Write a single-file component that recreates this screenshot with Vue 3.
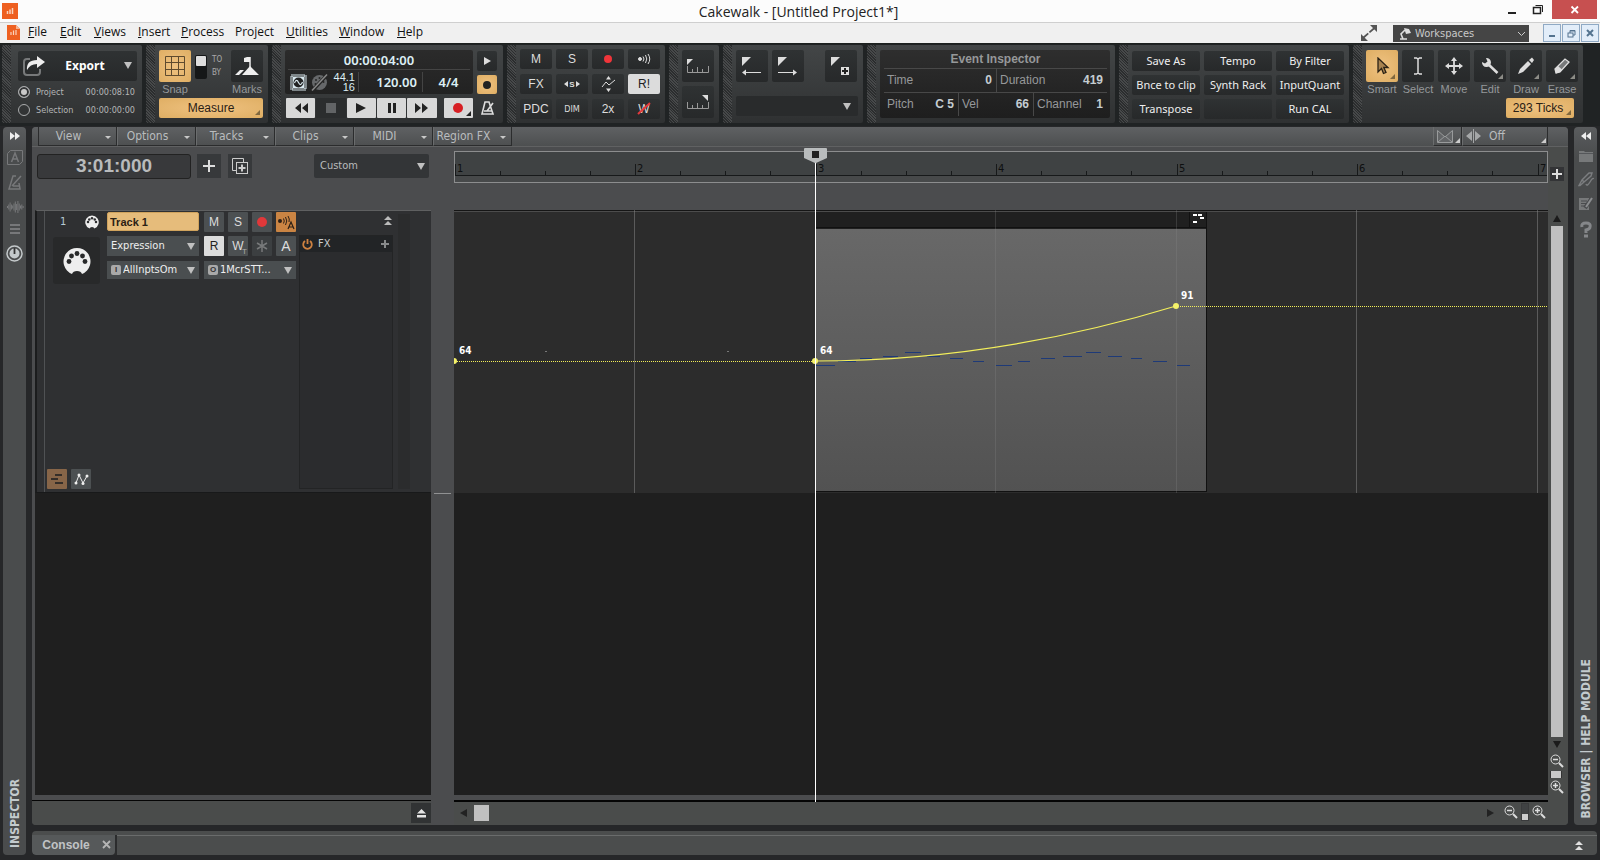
<script setup>
const menus = [
  { key: 'F', rest: 'ile', w: 32 },
  { key: 'E', rest: 'dit', w: 34 },
  { key: 'V', rest: 'iews', w: 44 },
  { key: 'I', rest: 'nsert', w: 43 },
  { key: 'P', rest: 'rocess', w: 54 },
  { key: '', rest: 'Project', w: 51 },
  { key: 'U', rest: 'tilities', w: 53 },
  { key: 'W', rest: 'indow', w: 58 },
  { key: 'H', rest: 'elp', w: 32 }
]
const menuColumns = menus.map(m => m.w + 'px').join(' ')
const tabs = ['View', 'Options', 'Tracks', 'Clips', 'MIDI', 'Region FX']
const custom = ['Save As', 'Tempo', 'By Filter', 'Bnce to clip', 'Synth Rack', 'InputQuant', 'Transpose', '', 'Run CAL']
const tools = ['Smart', 'Select', 'Move', 'Edit', 'Draw', 'Erase']

const barWidth = 180.5
const bars = [0, 1, 2, 3, 4, 5, 6].map(i => Math.floor(i * barWidth))
const ticks = Array.from({ length: 25 }, (_, i) => Math.floor(i * barWidth / 4)).filter((_, i) => i % 4)
const notes = [
  [362, 155, 19], [384, 151, 18], [406, 148, 12], [429, 146, 15], [451, 142, 16], [473, 146, 13],
  [496, 148, 13], [519, 151, 11], [542, 155, 16], [564, 151, 12], [587, 148, 14], [609, 146, 19],
  [632, 142, 15], [654, 146, 14], [677, 148, 11], [699, 151, 14], [723, 155, 13]
]
const wave = [2, 5, 9, 5, 3, 7, 11, 6, 12, 7, 3, 5, 2]
</script>

<template>
  <div class="app">
    <header class="titlebar">
      <svg class="logo" width="16" height="16" viewBox="0 0 16 16"><rect width="16" height="16" fill="#ee6021" /><path d="M5.500 11V8M8 11V6.500M10.500 11V5" stroke="#fbd3bd" stroke-width="1.500" /></svg>
      <h1>Cakewalk - [Untitled Project1*]</h1>
      <div class="winbtns">
        <button aria-label="Minimize"><svg width="10" height="12"><rect x="1" y="8" width="8" height="2" fill="#222" /></svg></button>
        <button aria-label="Restore"><svg width="12" height="12" fill="none" stroke="#222"><rect x="1.500" y="3.500" width="7" height="6" stroke-width="1.500" /><path d="M3.500 1.500H10.500V8" /></svg></button>
        <button class="close" aria-label="Close"><svg width="10" height="10" stroke="#fff" stroke-width="1.800"><path d="M1.500 1.500 8 8M8 1.500 1.500 8" /></svg></button>
      </div>
    </header>

    <nav class="menubar">
      <svg class="doc" width="14" height="17" viewBox="0 0 14 17"><path d="M0 1H9L13 5V16H0Z" fill="#ee6021" /><path d="M9 1 13 5H9Z" fill="#f8b28e" /><path d="M4 11V8M6.500 11V6.500M9 11V6" stroke="#fbd3bd" stroke-width="1.200" /></svg>
      <div class="menus" :style="{ gridTemplateColumns: menuColumns }">
        <button v-for="m in menus" :key="m.rest"><u>{{ m.key }}</u>{{ m.rest }}</button>
      </div>
      <svg class="expand" width="18" height="16" viewBox="0 0 18 16"><path d="M3 13 14.500 3" stroke="#555" stroke-width="1.800" stroke-dasharray="7 1.500" /><path d="M10 0H17V7ZM1 9V16H8Z" fill="#555" /></svg>
      <label class="workspaces">
        <svg width="12" height="13" viewBox="0 0 12 13"><path d="M1 12H8M4 12 2 7 6 3" fill="none" stroke="#ddd" stroke-width="1.600" /><path d="M5 1 10 2 12 6 7 7Z" fill="#ddd" /></svg>
        <select aria-label="Workspaces"><option>Workspaces</option></select>
        <svg width="9" height="6" fill="none" stroke="#ccc"><path d="M1 1 4.500 4.500 8 1" /></svg>
      </label>
      <div class="mdi">
        <button aria-label="Minimize view"><svg width="8" height="10"><rect x="1" y="7" width="6" height="2" fill="#54738f" /></svg></button>
        <button aria-label="Restore view"><svg width="9" height="9" fill="none" stroke="#54738f"><rect x="1" y="4" width="5" height="4" /><path d="M3 4V1.500H8V6H6M3 2H8" /></svg></button>
        <button aria-label="Close view"><svg width="8" height="8" stroke="#54738f" stroke-width="2"><path d="M1 1 7 7M7 1 1 7" /></svg></button>
      </div>
    </nav>

    <section class="toolbar">
      <div class="module m-export">
        <button class="export">
          <svg width="24" height="22" viewBox="0 0 24 22"><path d="M8 4H5Q2 4 2 7V17Q2 20 5 20H15Q18 20 18 17V14" fill="none" stroke="#77797a" stroke-width="2" /><path d="M5 15Q4 5 15 5V1L23 7 15 13V9Q8 9 5 15Z" fill="#eee" /></svg>
          <span>Export</span><i class="tri"></i>
        </button>
        <label class="range"><input type="radio" name="range" checked /><span>Project</span><span>00:00:08:10</span></label>
        <label class="range"><input type="radio" name="range" /><span>Selection</span><span>00:00:00:00</span></label>
      </div>

      <div class="module m-snap">
        <div class="snap-row">
          <div class="tool"><button class="sq gold" aria-label="Snap"><svg width="20" height="20" fill="none" stroke="#5f4b2e"><path d="M.5.500H19.500V19.500H.5ZM.5 6.500H19.500M.5 13.500H19.500M6.500.500V19.500M13.500.500V19.500" /></svg></button><span>Snap</span></div>
          <button class="toggle" aria-label="Snap to or by"><i></i></button>
          <div class="toby"><span>TO</span><span>BY</span></div>
          <div class="tool"><button class="sq" aria-label="Marks"><svg width="26" height="22" viewBox="0 0 26 22"><path d="M1 20 6 15H10L5 20ZM8 20 16 11 25 20Z" fill="#eee" /><path d="M16 13V2" stroke="#eee" stroke-width="1.500" /><path d="M16 2H13L10 3V7H16Z" fill="#eee" /></svg></button><span>Marks</span></div>
        </div>
        <button class="measure corner">Measure</button>
      </div>

      <div class="module m-transport">
        <div class="lcd">
          <div class="lcd-time">00:00:04:00</div>
          <div class="lcd-row">
            <svg width="17" height="17" viewBox="0 0 17 17"><rect x="1.500" y="1.500" width="14" height="14" fill="none" stroke="#d9e8ee" stroke-width="3" stroke-dasharray="1 1" /><rect x="3" y="3" width="11" height="11" fill="#d9e8ee" /><circle cx="8.500" cy="8.500" r="5" fill="#222" /><path d="M4.500 9Q6.500 4 8.500 8.500T12.500 8" fill="none" stroke="#d9e8ee" stroke-width="1.200" /></svg>
            <svg width="17" height="17" viewBox="0 0 17 17"><circle cx="8.500" cy="8.500" r="7.500" fill="#66686a" /><g fill="#292929"><circle cx="5" cy="6" r="1" /><circle cx="8.500" cy="4" r="1" /><circle cx="12.500" cy="8" r="1" /><circle cx="4.500" cy="10" r="1" /></g><path d="M1 17 16 1" stroke="#252525" stroke-width="3.500" /><path d="M1 16.500 16 .5" stroke="#888" stroke-width="1.500" /></svg>
            <div class="rate"><span>44.1</span><span>16</span></div>
            <b class="tempo">120.00</b>
            <b class="meter">4/4</b>
          </div>
        </div>
        <div class="side">
          <button aria-label="Play list"><svg width="9" height="10"><path d="M1 1 8 5 1 9Z" fill="#ddd" /></svg></button>
          <button class="gold" aria-label="Loop"><svg width="10" height="10"><circle cx="5" cy="5" r="4" fill="#222" /></svg></button>
          <button class="bare" aria-label="Metronome"><svg width="15" height="16" viewBox="0 0 15 16" fill="none" stroke="#ddd" stroke-width="1.600"><path d="M5 2H9L13 14H2ZM4 11H12M7 11 13 3" /></svg></button>
        </div>
        <div class="keys">
          <button aria-label="Rewind"><svg width="14" height="12" fill="#222"><path d="M7 1V11L1 6ZM14 1V11L8 6Z" /></svg></button>
          <button class="off" aria-label="Stop"><svg width="10" height="10"><rect width="10" height="10" fill="#626466" /></svg></button>
          <button aria-label="Play"><svg width="12" height="12"><path d="M1 1 11 6 1 11Z" fill="#222" /></svg></button>
          <button aria-label="Pause"><svg width="10" height="10" fill="#222"><rect x="1" width="3" height="10" /><rect x="6" width="3" height="10" /></svg></button>
          <button aria-label="Fast forward"><svg width="14" height="12" fill="#222"><path d="M0 1V11L6 6ZM7 1V11L13 6Z" /></svg></button>
          <button class="rec corner" aria-label="Record"><svg width="10" height="10"><circle cx="5" cy="5" r="5" fill="#d71f24" /></svg></button>
        </div>
      </div>

      <div class="module m-mix">
        <button>M</button><button>S</button>
        <button aria-label="Arm"><svg width="10" height="10"><circle cx="5" cy="5" r="4" fill="#f0353a" /></svg></button>
        <button aria-label="Input echo"><svg width="14" height="12" viewBox="0 0 14 12" fill="none" stroke="#ddd"><circle cx="3" cy="6" r="1.500" fill="#ddd" /><path d="M6 3.500Q8 6 6 8.500M8.500 2Q11 6 8.500 10M11 1Q14.500 6 11 11" /></svg></button>
        <button>FX</button>
        <button aria-label="Exclusive solo"><svg width="17" height="10" viewBox="0 0 17 10"><path d="M4 2V8L0 5ZM12 2V8L16 5Z" fill="#ddd" /><text x="8" y="8" text-anchor="middle" font-size="8" font-weight="bold" fill="#ddd">S</text></svg></button>
        <button aria-label="Automation offset"><svg width="15" height="16" viewBox="0 0 15 16"><path d="M5 3.500 7.500 0 10 3.500ZM5 12.500 7.500 16 10 12.500Z" fill="#ddd" /><path d="M1 11 5 6 8 9 14 4" fill="none" stroke="#ddd" /></svg></button>
        <button class="lit">R!</button>
        <button>PDC</button><button class="small">DIM</button><button>2x</button>
        <button class="wstrike" aria-label="W"><span>W</span><svg width="14" height="14"><path d="M1 12 13 1" stroke="#e6393c" stroke-width="2" /></svg></button>
      </div>

      <div class="module m-ruler">
        <button aria-label="Set start"><svg width="22" height="16" viewBox="0 0 22 16"><path d="M0 1H6L0 7Z" fill="#ddd" /><path d="M.5 8V14.500H21.500V8M5.500 11V14M10.500 9V14M15.500 11V14" fill="none" stroke="#999" /></svg></button>
        <button aria-label="Set end"><svg width="22" height="16" viewBox="0 0 22 16"><path d="M15 1H21V7Z" fill="#ddd" /><path d="M.5 8V14.500H21.500V8M5.500 11V14M10.500 9V14M15.500 11V14" fill="none" stroke="#999" /></svg></button>
      </div>

      <div class="module m-marker">
        <div class="mk-row">
          <button class="sq" aria-label="Previous marker"><svg width="20" height="20"><path d="M0 1H9L0 10Z" fill="#ddd" /><path d="M4 16.500H19" stroke="#ddd" /><path d="M0 16.500 4 13.500V19.500Z" fill="#ddd" /></svg></button>
          <button class="sq" aria-label="Next marker"><svg width="20" height="20"><path d="M0 1H9L0 10Z" fill="#ddd" /><path d="M0 16.500H16" stroke="#ddd" /><path d="M19 16.500 15 13.500V19.500Z" fill="#ddd" /></svg></button>
          <button class="sq last" aria-label="Insert marker"><svg width="20" height="20"><path d="M0 1H9L0 10Z" fill="#ddd" /><rect x="10" y="11" width="8" height="8" fill="#ddd" /><path d="M14 12V18M11 15H17" stroke="#222" stroke-width="2" /></svg></button>
        </div>
        <label class="pick"><select aria-label="Marker"><option></option></select><i class="tri"></i></label>
      </div>

      <div class="module m-event">
        <div class="event">
          <h2>Event Inspector</h2>
          <div class="ev-row two"><div><span>Time</span><b>0</b></div><div><span>Duration</span><b>419</b></div></div>
          <div class="ev-row three"><div><span>Pitch</span><b>C 5</b></div><div><span>Vel</span><b>66</b></div><div><span>Channel</span><b>1</b></div></div>
        </div>
      </div>

      <div class="module m-custom">
        <button v-for="(c, i) in custom" :key="i" :aria-label="c || 'Empty slot'">{{ c }}</button>
      </div>

      <div class="module m-tools">
        <div class="tool-row">
          <div v-for="(t, i) in tools" :key="t" class="tool">
            <button class="sq" :class="{ gold: i === 0, corner: i === 0 || i > 2 }" :aria-label="t">
              <svg v-if="i === 0" width="16" height="18" viewBox="0 0 16 18"><path d="M4 1V15L7.500 11.500 9.500 16.500 12 15.500 9.800 10.500H14Z" fill="#a88350" stroke="#2a2115" stroke-width="1.300" /></svg>
              <svg v-else-if="i === 1" width="10" height="18" viewBox="0 0 10 18" fill="none" stroke="#ddd" stroke-width="1.500"><path d="M1 1H3.500L5 2 6.500 1H9M1 17H3.500L5 16 6.500 17H9M5 2V16" /></svg>
              <svg v-else-if="i === 2" width="18" height="18" viewBox="0 0 18 18"><path d="M9 3V15M3 9H15" stroke="#ddd" stroke-width="1.800" /><path d="M9 0 12 4H6ZM9 18 12 14H6ZM0 9 4 6V12ZM18 9 14 6V12Z" fill="#ddd" /></svg>
              <svg v-else-if="i === 3" width="18" height="18" viewBox="0 0 18 18"><path d="M7 7 16.500 16" stroke="#ddd" stroke-width="2.500" /><path d="M5 1A4.500 4.500 0 1 1 1 5L4 6.500 6.500 4.500Z" fill="#ddd" /></svg>
              <svg v-else-if="i === 4" width="18" height="18" viewBox="0 0 18 18"><path d="M1 17 3 12 11 4 14 7 6 15ZM12 3 15 .5 17 3 15 6Z" fill="#ddd" /></svg>
              <svg v-else width="18" height="18" viewBox="0 0 18 18"><path d="M2 12 12 2 16 5 7 15 3 16Z" fill="#77797a" stroke="#ddd" stroke-width="1.300" /><path d="M2 12 5 9 9 12.500 7 15 3 16.500Z" fill="#ddd" /></svg>
            </button>
            <span>{{ t }}</span>
          </div>
        </div>
        <button class="ticks corner">293 Ticks</button>
      </div>
    </section>

    <div class="work">
      <aside class="rail left">
        <button aria-label="Expand inspector"><svg width="10" height="8" fill="#eee"><path d="M0 0 5 4 0 8ZM5 0 10 4 5 8Z" /></svg></button>
        <svg width="16" height="15" viewBox="0 0 16 15" fill="none" stroke="#77787a"><path d="M3.500.500H15.500V11.500L12.500 14.500H.5V3.500Z" /><path d="M4.500 12 8 3 11.500 12M5.500 9H10.500" stroke-width="1.500" /></svg>
        <svg width="14" height="15" viewBox="0 0 14 15" fill="none" stroke="#77787a" stroke-width="1.500"><path d="M8 1H5L1 14H12L11 8M4 11 13 1M5 11H11" /></svg>
        <svg width="18" height="14" viewBox="0 0 18 14"><g fill="#77787a"><rect v-for="(h, i) in wave" :key="i" :x="1 + i * 1.300" :y="7 - h / 2" width="1" :height="h" /></g></svg>
        <svg width="10" height="11" fill="#77787a"><rect width="10" height="2" /><rect y="4" width="10" height="2" /><rect y="8" width="10" height="2" /></svg>
        <svg width="17" height="17" viewBox="0 0 17 17"><circle cx="8.500" cy="8.500" r="7.500" fill="none" stroke="#c4c9cb" stroke-width="1.500" /><circle cx="8.500" cy="8.500" r="5" fill="#c4c9cb" /><path d="M8.500 3V9" stroke="#333" stroke-width="1.800" /></svg>
        <strong>INSPECTOR</strong>
      </aside>

      <main class="panel">
        <div class="tabs">
          <button v-for="t in tabs" :key="t">{{ t }}<i></i></button>
          <div class="grow"></div>
          <button class="xfade corner" aria-label="Crossfade"><svg width="16" height="13" viewBox="0 0 16 13"><path d="M.5 12.500V.5L8 7 15.500.5V12.500ZM1 12 8 6 15 12" fill="#636567" stroke="#999b9c" /></svg></button>
          <button class="nudge corner"><svg width="15" height="14" viewBox="0 0 15 14"><path d="M6 2V12L0 7ZM9 2V12L15 7Z" fill="#a5a7a8" /><path d="M7.500 0V14" stroke="#a5a7a8" /></svg><span>Off</span></button>
          <div class="tab-end"></div>
        </div>

        <div class="body">
          <section class="trackpane">
            <div class="controls">
              <output class="now">3:01:000</output>
              <button class="add" aria-label="Add track"><svg width="12" height="12" stroke="#ddd" stroke-width="2"><path d="M6 0V12M0 6H12" /></svg></button>
              <button class="add" aria-label="Duplicate track"><svg width="16" height="16" fill="none" stroke="#ccc"><path d="M4 12.500H.5V.5H11.500V4" /><rect x="4.500" y="4.500" width="11" height="11" /><path d="M10 6.500V13.500M6.500 10H13.500" stroke-width="2" /></svg></button>
              <label class="pick custom"><select aria-label="Track control"><option>Custom</option></select><i class="tri"></i></label>
            </div>
            <div class="track">
              <div class="gutter"></div>
              <div class="strip">
                <div class="num-row"><span>1</span><svg width="14" height="14" viewBox="0 0 28 28"><path d="M9 27A13.500 13.500 0 1 1 19 27Q18 24 14 24T9 27Z" fill="#eee" /><g fill="#2e2f31"><circle cx="6" cy="14" r="2.500" /><circle cx="8.500" cy="9" r="2.500" /><circle cx="14" cy="6.500" r="2.500" /><circle cx="19.500" cy="9" r="2.500" /><circle cx="22" cy="14" r="2.500" /></g></svg></div>
                <div class="thumb"><svg width="28" height="28" viewBox="0 0 28 28"><path d="M9 27A13.500 13.500 0 1 1 19 27Q18 24 14 24T9 27Z" fill="#eee" /><g fill="#28292a"><circle cx="6" cy="14.500" r="2.400" /><circle cx="8.500" cy="9" r="2.400" /><circle cx="14" cy="6.500" r="2.400" /><circle cx="19.500" cy="9" r="2.400" /><circle cx="22" cy="14.500" r="2.400" /></g></svg></div>
                <div class="lanes">
                  <button class="brown" aria-label="Take lanes"><svg width="12" height="10" stroke="#352e29" stroke-width="2"><path d="M4 1H11M0 5H7M4 9H12" /></svg></button>
                  <button aria-label="Automation lanes"><svg width="15" height="14" viewBox="0 0 15 14"><path d="M2 11 5 3 9 11 13 4" fill="none" stroke="#eee" /><g fill="#eee"><circle cx="2" cy="11" r="1.500" /><circle cx="5" cy="3" r="1.500" /><circle cx="9" cy="11.500" r="1.500" /><circle cx="13" cy="4" r="1.500" /></g></svg></button>
                </div>
              </div>
              <div class="widgets">
                <div class="wrow">
                  <input class="name" aria-label="Track name" value="Track 1" />
                  <button>M</button><button>S</button>
                  <button aria-label="Arm track"><svg width="10" height="10"><circle cx="5" cy="5" r="5" fill="#e0383a" /></svg></button>
                  <button class="orange" aria-label="Echo"><svg width="18" height="16" viewBox="0 0 18 16"><circle cx="3" cy="7" r="2" fill="#2c2016" /><g fill="none" stroke="#2c2016"><path d="M6.500 4.500Q8 7 6.500 9.500M8.500 3Q11 7 8.500 11M11 2Q13 5 12 8" /></g><path d="M11 15 14 8 17 15M12 13H16" fill="none" stroke="#2c2016" stroke-width="1.200" /></svg></button>
                </div>
                <div class="wrow">
                  <label class="drop"><select aria-label="Edit filter"><option>Expression</option></select><i class="tri"></i></label>
                  <button class="lit">R</button><button>W<sub>T</sub></button>
                  <button class="dim" aria-label="Freeze"><svg width="12" height="12" stroke="#77797a" stroke-width="1.500"><path d="M6 0V12M1 3 11 9M11 3 1 9" /></svg></button>
                  <button class="big">A</button>
                </div>
                <div class="wrow">
                  <label class="drop"><em>I</em><select aria-label="Input"><option>AllInptsOm</option></select><i class="tri"></i></label>
                  <label class="drop"><em>O</em><select aria-label="Output"><option>1McrSTT...</option></select><i class="tri"></i></label>
                </div>
              </div>
              <div class="fxcol">
                <button aria-label="Collapse track"><svg width="8" height="10" fill="#bbb"><path d="M4 0 8 4H0ZM4 5 8 9H0Z" /></svg></button>
                <div class="fx">
                  <div class="fxhead"><svg width="11" height="11" viewBox="0 0 11 11" fill="none" stroke="#cf8241" stroke-width="1.800"><path d="M3 2A4.300 4.300 0 1 0 8 2M5.500 0V5" /></svg><span>FX</span><button aria-label="Add effect"><svg width="8" height="8" stroke="#888a8b" stroke-width="2"><path d="M4 0V8M0 4H8" /></svg></button></div>
                </div>
              </div>
              <div class="vu"></div>
            </div>
            <div class="void"></div>
            <div class="foot"><button aria-label="Show bus pane"><svg width="9" height="9" fill="#e5e5e5"><path d="M4.500 0 9 4.500H0ZM0 6H9V8.500H0Z" /></svg></button></div>
          </section>

          <div class="splitter"></div>

          <section class="clippane">
            <div class="rulerwrap">
              <svg class="ruler" width="100%" height="30">
                <rect width="100%" height="24" fill="#3f4243" />
                <path d="M0 23.500H3000" stroke="#17191a" />
                <g stroke="#17191a"><path v-for="x in bars" :key="x" :d="`M${x + .5} 12V24`" /><path v-for="x in ticks" :key="x" :d="`M${x + .5} 19V24`" /></g>
                <g class="barno"><text v-for="(x, i) in bars" :key="x" :x="x + 2" y="20">{{ i + 1 }}</text></g>
              </svg>
            </div>
            <svg class="clips" width="100%" height="284">
              <defs><linearGradient id="clipfill" x1="0" y1="0" x2="0" y2="1"><stop offset="0" stop-color="#686868" /><stop offset="1" stop-color="#525252" /></linearGradient></defs>
              <rect width="100%" height="283" fill="#2c2c2c" />
              <path d="M0 .5H3000" stroke="#151515" />
              <path d="M0 1.500H3000" stroke="#4c4c4c" />
              <rect x="362" y="2" width="391" height="280" fill="#202020" />
              <rect x="362" y="19" width="391" height="263" fill="url(#clipfill)" />
              <path d="M362 17.500H753M735.500 2V18M752.500 2V282M362 281.500H753" stroke="#111" fill="none" />
              <g fill="#fff"><rect x="739" y="4" width="4" height="2" /><rect x="744" y="4" width="4" height="2" /><rect x="746" y="7" width="4" height="2" /><rect x="739" y="11" width="4" height="2" /></g>
              <g stroke="#8a8a8a"><path v-for="x in bars.slice(1)" :key="x" :d="`M${x + .5} 0V283`" :stroke-opacity="x > 362 && x < 753 ? .25 : .5" /></g>
              <g stroke="#1e3a78"><path v-for="n in notes" :key="n[0]" :d="`M${n[0]} ${n[1] + .5}h${n[2]}`" /></g>
              <g fill="#777"><rect x="91" y="141" width="2" height="1" /><rect x="273" y="141" width="2" height="1" /></g>
              <g stroke="#f3ef5b" fill="none">
                <path d="M3 151.500H361M726 96.500H3000" stroke-dasharray="1 1" />
                <path d="M361 151Q541.500 151 722 96" stroke-width="1.200" />
              </g>
              <g fill="#f5f26a"><circle cx="0" cy="151" r="3" /><circle cx="361" cy="151" r="3" /><circle cx="722" cy="96" r="3" /></g>
              <g class="val"><text x="5" y="144">64</text><text x="366" y="144">64</text><text x="727" y="89">91</text></g>
            </svg>
            <div class="void"></div>
            <div class="hscroll">
              <button aria-label="Scroll left"><svg width="7" height="8"><path d="M7 0V8L0 4Z" fill="#222" /></svg></button>
              <div class="hthumb"></div>
              <div class="grow"></div>
              <button aria-label="Scroll right"><svg width="7" height="8"><path d="M0 0V8L7 4Z" fill="#222" /></svg></button>
            </div>
            <div class="playhead"><svg width="23" height="15"><path d="M1 0H22Q23 0 23 1V10L12 15H11L0 10V1Q0 0 1 0Z" fill="#b9bcbd" /><rect x="8" y="3" width="7" height="7" fill="#222" /></svg></div>
          </section>

          <section class="vscroll">
            <button class="plus" aria-label="Add ruler"><svg width="10" height="10" stroke="#ddd" stroke-width="2"><path d="M5 0V10M0 5H10" /></svg></button>
            <button aria-label="Scroll up"><svg width="8" height="7"><path d="M4 0 8 7H0Z" fill="#1b1b1b" /></svg></button>
            <div class="vthumb"></div>
            <button class="down" aria-label="Scroll down"><svg width="8" height="7"><path d="M0 0H8L4 7Z" fill="#1b1b1b" /></svg></button>
            <button aria-label="Zoom out tracks"><svg width="14" height="14" fill="none" stroke="#ddd"><circle cx="5.500" cy="5.500" r="4.500" /><path d="M3 5.500H8" stroke-width="1.500" /><path d="M9 9 13 13" stroke-width="2" /></svg></button>
            <div class="vzoom"></div>
            <button aria-label="Zoom in tracks"><svg width="14" height="14" fill="none" stroke="#ddd"><circle cx="5.500" cy="5.500" r="4.500" /><path d="M3 5.500H8M5.500 3V8" stroke-width="1.500" /><path d="M9 9 13 13" stroke-width="2" /></svg></button>
            <div class="hzoom">
              <button aria-label="Zoom out time"><svg width="14" height="14" fill="none" stroke="#ddd"><circle cx="5.500" cy="5.500" r="4.500" /><path d="M3 5.500H8" stroke-width="1.500" /><path d="M9 9 13 13" stroke-width="2" /></svg></button>
              <i></i>
              <button aria-label="Zoom in time"><svg width="14" height="14" fill="none" stroke="#ddd"><circle cx="5.500" cy="5.500" r="4.500" /><path d="M3 5.500H8M5.500 3V8" stroke-width="1.500" /><path d="M9 9 13 13" stroke-width="2" /></svg></button>
            </div>
          </section>
        </div>
      </main>

      <aside class="rail right">
        <button aria-label="Expand browser"><svg width="10" height="8" fill="#eee"><path d="M5 0 0 4 5 8ZM10 0 5 4 10 8Z" /></svg></button>
        <svg width="14" height="12"><path d="M0 1H5L6 2H14V12H0Z" fill="#77797a" /><path d="M0 3.500H14" stroke="#55575a" /></svg>
        <svg width="16" height="15" viewBox="0 0 16 15" fill="none" stroke="#7c7e80" stroke-width="1.400"><path d="M1 13.500 4 8 11 1 14 1 13 4 6 10 2 13.500ZM4 8 6.500 10M8 12Q9 15 12 10T15.500 7" /></svg>
        <svg width="14" height="14" viewBox="0 0 14 14"><path d="M0 1H10V13H0Z" fill="#77797a" /><path d="M2 4H8M2 6.500H7M2 9H6" stroke="#4a4c4e" /><path d="M6 11 13 1" stroke="#4a4c4e" stroke-width="4" /><path d="M7 10 13 1" stroke="#8c8e90" stroke-width="2" /></svg>
        <svg class="help" width="12" height="17" viewBox="0 0 12 17"><path d="M2 6Q1 2 6 2T10 6Q10 8 6 9V12" fill="none" stroke="#85878a" stroke-width="3" /><rect x="4" y="13.500" width="4" height="3" fill="#85878a" /></svg>
        <strong>BROWSER | HELP MODULE</strong>
      </aside>

      <footer class="console">
        <button class="ctab">Console<svg width="9" height="9" stroke="#b5b5b5" stroke-width="1.800"><path d="M1 1 8 8M8 1 1 8" /></svg></button>
        <div class="cbar"><button aria-label="Expand dock"><svg width="8" height="10" fill="#e0e0e0"><path d="M4 0 8 4H0ZM4 5 8 9H0Z" /></svg></button></div>
      </footer>
    </div>
  </div>
</template>

<style>
html, body { margin: 0; background: #242527; }
</style>

<style scoped>
.app { --ui: "DejaVu Sans Condensed", "Noto Sans", sans-serif; --ar: "Liberation Sans", Arial, sans-serif; display: flex; flex-direction: column; min-height: 100vh; background: #262729; color: #ccc; font: 12px/14px var(--ui); overflow: hidden; }
.app * { box-sizing: border-box; }
button, select, input { margin: 0; padding: 0; border: 0; background: none; color: inherit; font: inherit; border-radius: 0; }
button { display: flex; align-items: center; justify-content: center; }
select { appearance: none; width: 100%; min-width: 0; outline: none; }
svg { display: block; flex: none; }
.grow { flex: 1; }
.tri { flex: none; border: 4px solid transparent; border-top: 7px solid #c0c0c0; border-bottom: 0; }

.titlebar { display: flex; height: 23px; background: #fcfcfc; border-bottom: 1px solid #cfcfcf; }
.logo { margin: 3px 0 0 2px; }
.titlebar h1 { flex: 1; margin: 0; text-align: center; color: #222; font: 14px/23px "Open Sans", sans-serif; padding-left: 80px; }
.winbtns { display: flex; }
.winbtns button { width: 26px; height: 19px; }
.winbtns .close { width: 45px; margin: 0 3px 0 1px; background: #c75050; }

.menubar { display: flex; height: 20px; background: #f0f0f0; color: #111; }
.doc { margin: 1px 7px 0 7px; }
.menus { display: grid; flex: 1; }
.menus button { justify-content: flex-start; font: 12px/18px "Open Sans", sans-serif; height: 18px; white-space: pre; }
.expand { margin-top: 2px; }
.workspaces { display: flex; align-items: center; gap: 4px; width: 136px; height: 17px; margin: 2px 14px 0 15px; padding: 0 3px 0 6px; background: #454545; color: #c9c9c9; font-size: 11px; }
.mdi { display: flex; gap: 1px; margin: 1px 1px 0 0; }
.mdi button { width: 18px; height: 18px; border: 1px solid #8fa9c4; background: #e2edf9; }

.toolbar { display: flex; gap: 4px; height: 83px; padding: 1px 2px 0; background: #202324; border-top: 1px solid #1d211f; }
.module { flex: none; height: 78px; padding: 5px 5px 4px 13px; border-radius: 2px; background: repeating-linear-gradient(45deg, #2b2d2e 0 1px, #47494a 1px 2px) left / 9px 100% no-repeat, linear-gradient(#434647, #2f3132); }
.module button { background: linear-gradient(#2f3233, #27292a); color: #ddd; border-radius: 2px; }
.module .gold, .module .measure, .module .ticks { background: radial-gradient(#efc281, #dfae63); color: #2b2115; }
.sq { width: 32px; height: 32px; }
.corner { position: relative; }
.corner::after { content: ""; position: absolute; right: 3px; bottom: 3px; width: 0; height: 0; border-left: 5px solid transparent; border-bottom: 5px solid #8c8c86; }
.gold.corner::after, .measure::after, .ticks::after { border-bottom-color: #80683f; }
.tool { display: flex; flex-direction: column; align-items: center; gap: 1px; width: 32px; white-space: nowrap; font: 11px/13px var(--ar); color: #95989a; }
.tool span { display: block; }

.m-export { width: 140px; display: flex; flex-direction: column; padding-left: 16px; padding-top: 6px; }
.export { height: 30px; width: 119px; padding: 0 5px 0 4px; gap: 6px; margin-bottom: 3px; }
.export span { flex: 1; text-align: center; font: bold 12px/14px "Noto Sans", var(--ui); color: #fff; }
.range { display: grid; grid-template-columns: 18px 1fr auto; align-items: center; height: 18px; padding-right: 2px; font-size: 9px; color: #b4b6b7; }
.range input { appearance: none; width: 12px; height: 12px; border: 1px solid #a9abac; border-radius: 50%; }
.range input:checked { background: #c9c9c9; box-shadow: inset 0 0 0 2px #343637; }

.m-snap { width: 122px; }
.snap-row { display: flex; height: 48px; }
.toggle { width: 12px; height: 24px; margin: 5px 5px 0 4px; align-items: flex-start; padding: 1px; }
.module .toggle { background: #151718; }
.toggle i { width: 10px; height: 10px; background: #ddd; border-radius: 1px; }
.toby { width: 19px; padding-top: 3px; font: 8px/13px var(--ui); color: #aaa; display: flex; flex-direction: column; }
.measure { width: 104px; height: 20px; font: 12px/14px var(--ar); }

.m-transport { width: 231px; display: grid; grid-template-columns: 188px 21px; grid-template-rows: 44px 20px; gap: 4px 4px; align-content: start; }
.lcd { background: linear-gradient(#2b2b2b, #222); color: #dceef4; padding: 0 3px; border-radius: 2px; text-align: center; }
.lcd-time { height: 20px; font: 600 13px/21px "Noto Sans", sans-serif; border-bottom: 1px solid #444; }
.lcd-row { display: flex; align-items: center; height: 24px; gap: 4px; padding-left: 2px; }
.rate { display: flex; flex-direction: column; width: 27px; font: 11px/10px var(--ar); padding-right: 3px; border-right: 1px solid #444; text-align: right; }
.tempo, .meter { font: 600 13px/20px "Noto Sans", sans-serif; }
.tempo { width: 60px; text-align: right; padding-right: 5px; border-right: 1px solid #444; }
.meter { flex: 1; }
.side { grid-row: span 2; display: flex; flex-direction: column; gap: 4px; padding-top: 1px; }
.side button { height: 20px; width: 20px; }
.module .bare { background: none; }
.keys { display: flex; gap: 1px; padding-left: 1px; }
.keys button { flex: 1; height: 20px; border-radius: 1px; background: #d8d8d8; }
.keys .off { background: #2b2d2e; }
.keys .rec { margin-left: 6px; }
.rec::after { border-bottom-color: #222; right: 2px; bottom: 2px; }

.m-mix { width: 158px; display: grid; grid-template-columns: repeat(4, 32px); gap: 5px 4px; grid-auto-rows: 20px; padding-top: 4px; }
.m-mix button { font: 12px/14px var(--ar); }
.m-mix .small { font: 9px/12px var(--ui); }
.module .lit { background: #dcdcdc; color: #222; }
.wstrike { position: relative; }
.wstrike svg { position: absolute; }

.m-ruler { width: 50px; display: grid; gap: 4px; grid-auto-rows: 32px; }
.m-marker { width: 140px; }
.mk-row { display: flex; gap: 4px; margin-bottom: 14px; }
.mk-row .last { margin-left: 17px; }
.pick { display: flex; align-items: center; background: #292b2c; height: 20px; padding: 0 7px; border-radius: 2px; }

.m-event { width: 248px; }
.event { height: 68px; padding: 0 3px 0 4px; background: linear-gradient(#2e2e2e, #1e1e1e); border-radius: 2px; font: 12px/14px var(--ar); color: #96989a; }
.event h2 { margin: 0; height: 18px; text-align: center; font: bold 12px/18px var(--ar); }
.ev-row { display: grid; border-top: 1px solid #484848; }
.ev-row.two { grid-template-columns: 112px 1fr; }
.ev-row.three { grid-template-columns: 74px 75px 1fr; }
.ev-row div { display: flex; justify-content: space-between; height: 23px; line-height: 23px; padding: 0 4px 0 3px; }
.ev-row div + div { border-left: 1px solid #484848; }
.ev-row b { color: #c5cdd2; }

.m-custom { width: 230px; display: grid; grid-template-columns: repeat(3, 68px); gap: 4px; grid-auto-rows: 20px; padding-top: 6px; }
.m-custom button { color: #eee; font: 11px/14px "Noto Sans", sans-serif; white-space: nowrap; }

.m-tools { width: 230px; }
.tool-row { display: flex; gap: 4px; height: 48px; }
.ticks { width: 68px; height: 20px; margin-left: 140px; padding-right: 4px; font: 12px/14px var(--ar); }

.work { flex: 1; display: grid; grid-template-columns: 23px minmax(0, 1fr) 23px; grid-template-rows: 1fr 24px; gap: 6px; padding: 1px 3px 5px; }
.rail { display: flex; flex-direction: column; align-items: center; gap: 10px; background: linear-gradient(#5a5c5e, #4a4c4d 30px); border-radius: 4px; padding-top: 5px; }
.rail.left { grid-row: span 2; }
.rail strong { margin: auto 0 7px; writing-mode: vertical-rl; transform: rotate(180deg); font: bold 12px/14px var(--ui); color: #c3cacd; }
.rail > button { height: 8px; }

.panel { display: flex; flex-direction: column; background: #4b4c4e; border-radius: 4px; overflow: hidden; }
.tabs { display: flex; height: 20px; padding-left: 6px; background: linear-gradient(#5f6163, #4d4f50); border-bottom: 1px solid #606162; }
.tabs button { position: relative; width: 79px; height: 19px; padding-right: 18px; border: 1px solid #2b2c2d; border-top: 0; border-left-color: #6b6d6e; color: #b9bcbe; }
.tabs button:first-child { border-left-color: #2b2c2d; }
.tabs button > i { position: absolute; right: 5px; top: 9px; border: 3px solid transparent; border-top-color: #c8c8c8; border-bottom: 0; }
.tabs .xfade { width: 29px; padding: 0 5px 0 0; }
.tabs .nudge { width: 86px; justify-content: flex-start; gap: 8px; padding: 0 0 0 3px; }
.tabs .xfade::after, .tabs .nudge::after { right: 1px; bottom: 2px; border-bottom-color: #ccc; }
.tab-end { width: 20px; }

.body { flex: 1; display: grid; grid-template-columns: 399px 23px minmax(0, 1fr) 20px; }
.trackpane, .clippane, .vscroll { display: flex; flex-direction: column; }
.controls { display: flex; height: 63px; padding: 7px 2px 0 5px; }
.now { width: 154px; height: 25px; border: 1px solid #222; border-radius: 3px; background: #38393b; text-align: center; font: bold 19px/22px var(--ar); color: #b9bbbc; }
.add { width: 24px; height: 24px; margin-left: 6px; background: #37393b; }
.add + .add { margin-left: 7px; }
.custom { width: 115px; height: 24px; margin-left: auto; padding: 0 4px 0 6px; background: #333537; color: #b9bbbc; font-size: 11px; }
.track { display: flex; height: 283px; margin-left: 3px; border-top: 1px solid #5f6061; border-bottom: 1px solid #18191a; border-left: 2px solid #1b1c1d; background: #2f3032; }
.gutter { width: 8px; border-right: 1px solid #505254; }
.strip { display: flex; flex-direction: column; width: 62px; }
.num-row { display: flex; justify-content: space-between; align-items: center; height: 21px; padding: 0 8px 0 15px; color: #b6cad3; font-size: 11px; }
.thumb { display: grid; place-items: center; width: 47px; height: 47px; margin: 5px 0 0 8px; background: #28292a; border-radius: 3px; }
.lanes { display: flex; gap: 4px; margin: auto 0 3px 2px; }
.lanes button, .wrow button { width: 20px; height: 20px; background: #4c5052; color: #ddd; border-radius: 1px; }
.lanes .brown { background: #876548; }
.widgets { width: 192px; padding-top: 1px; }
.wrow { display: flex; gap: 4px; margin-bottom: 4px; }
.wrow > :first-child { width: 92px; margin-right: 1px; }
.name { height: 19px; padding: 0 2px; background: #e6bc7b; color: #2b2115; border: 1px solid #d0a35d; border-radius: 2px; font: bold 11px/14px var(--ar); }
.wrow button { font: 12px/14px var(--ar); position: relative; }
.wrow .lit { background: #dcdcdc; color: #222; }
.wrow .orange { background: #ca8443; }
.wrow .dim { background: #3c3f41; }
.wrow .big { font-size: 14px; }
.wrow sub { position: absolute; right: 1px; bottom: 0; font: 8px/9px var(--ar); color: #aaa; }
.drop { display: flex; align-items: center; height: 20px; width: 92px; padding: 0 4px; gap: 2px; background: #4a4e50; color: #eee; font-size: 11px; }
.wrow:last-child .drop { height: 18px; margin-top: 1px; }
.drop em { flex: none; width: 10px; height: 10px; background: #a9a9a9; color: #333; border-radius: 2px; font: bold 8px/10px var(--ar); text-align: center; }
.fxcol { display: flex; flex-direction: column; width: 95px; padding: 4px 1px 3px 0; }
.fxcol > button { width: 8px; height: 11px; margin: 0 1px 6px auto; }
.fx { flex: 1; margin-top: 3px; border: 1px solid #232425; background: #2b2c2e; }
.fxhead { display: flex; align-items: center; gap: 5px; height: 16px; padding: 0 3px 0 2px; background: #222426; color: #c9ccce; font-size: 11px; }
.fxhead button { margin-left: auto; }
.vu { width: 12px; margin: 3px 0 3px 4px; background: #2b2c2d; }
.void { flex: 1; background: #1f1f1f; }
.trackpane .void { margin-left: 3px; }
.foot { display: flex; justify-content: flex-end; height: 30px; padding-top: 3px; border-top: 5px solid #4b4c4e; box-shadow: inset 0 1px 0 #050505; background: #4a4c4b; }
.foot button { width: 20px; height: 20px; background: #313334; }
.splitter { margin: 346px 3px 0; border-top: 1px solid #909192; }

.clippane { position: relative; min-width: 0; }
.rulerwrap { height: 63px; padding-top: 4px; }
.ruler { border: 1px solid #8c8d8e; height: 32px; background: #47494a; }
.barno { font: 11px var(--ui); fill: #0e0f10; }
.val { font: bold 10px var(--ui); fill: #fff; }
.clips { width: 100%; background: #1f1f1f; }
.hscroll { display: flex; align-items: center; height: 30px; padding: 0 54px 0 6px; border-top: 5px solid #4b4c4e; box-shadow: inset 0 2px 0 #050505; background: #4a4c4b; }
.hthumb { width: 15px; height: 16px; margin-left: 7px; background: #c0c0c0; }
.playhead { position: absolute; top: 1px; bottom: 23px; left: 361px; width: 1px; background: #fff; }
.playhead svg { position: absolute; left: -11px; top: 0; }

.vscroll { position: relative; align-items: center; background: #4a4c4b; padding-bottom: 31px; }
.vscroll > .plus { margin: 20px 3px 34px 0; width: 14px; height: 14px; background: #333436; }
.vscroll > button { flex: none; margin-right: 2px; }
.vthumb { flex: 1; width: 12px; margin: 4px 3px 4px 0; background: #c0c0c0; }
.down { margin-bottom: 6px; }
.vzoom { width: 12px; height: 7px; margin: 3px 4px 2px 0; background: #c8c8c8; border: 1px solid #333; border-width: 0 1px; }
.hzoom { position: absolute; right: 22px; bottom: 4px; display: flex; gap: 3px; }
.hzoom i { width: 8px; height: 18px; border: 1px solid #3a3b3c; background: linear-gradient(#404243 60%, #ccc 60%); }

.console { grid-column: 2 / 4; display: flex; gap: 2px; background: #2b2c2d; border-radius: 4px; overflow: hidden; border-top: 4px solid #4b4d4d; }
.ctab { width: 83px; gap: 12px; padding: 3px 0 0 6px; background: #56595a; color: #c0c3c5; font: bold 12px/14px var(--ar); margin-top: -4px; border-radius: 4px; }
.cbar { flex: 1; display: flex; justify-content: flex-end; align-items: center; padding-right: 14px; background: #4b4d4d; border-top: 1px solid #6a6c6c; }
</style>
